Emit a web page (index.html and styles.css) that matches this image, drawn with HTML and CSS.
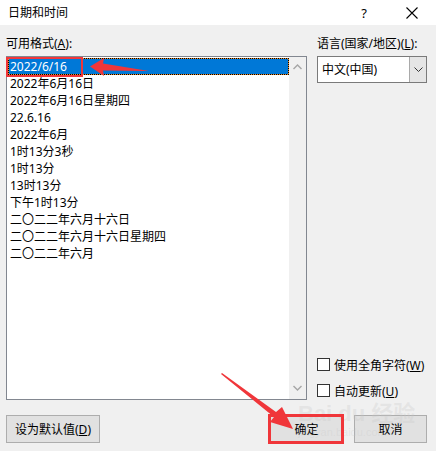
FILE: index.html
```html
<!DOCTYPE html>
<html lang="zh">
<head>
<meta charset="utf-8">
<title>日期和时间</title>
<link rel="stylesheet" href="styles.css">
</head>
<body>
<div class="dialog">
  <div class="titlebar">
    <span class="title">日期和时间</span>
    <span class="help">?</span>
    <svg class="close" width="12" height="12" viewBox="0 0 12 12"><path d="M0.5 0.5L11.5 11.5M11.5 0.5L0.5 11.5" stroke="#000" stroke-width="1.1" fill="none"/></svg>
  </div>
  <div class="content">
    <div class="main">
      <div class="left">
        <div class="label">可用格式(<u>A</u>):</div>
        <div class="listbox">
          <div class="items">
            <div class="item selected">2022/6/16</div>
            <div class="item">2022年6月16日</div>
            <div class="item">2022年6月16日星期四</div>
            <div class="item">22.6.16</div>
            <div class="item">2022年6月</div>
            <div class="item">1时13分3秒</div>
            <div class="item">1时13分</div>
            <div class="item">13时13分</div>
            <div class="item">下午1时13分</div>
            <div class="item">二〇二二年六月十六日</div>
            <div class="item">二〇二二年六月十六日星期四</div>
            <div class="item">二〇二二年六月</div>
          </div>
          <div class="scrollbar">
            <svg class="chev" width="9" height="6" viewBox="0 0 9 6"><path d="M0.5 5L4.5 1L8.5 5" stroke="#a6a6a6" stroke-width="1.4" fill="none"/></svg>
            <svg class="chev" width="9" height="6" viewBox="0 0 9 6"><path d="M0.5 1L4.5 5L8.5 1" stroke="#a6a6a6" stroke-width="1.4" fill="none"/></svg>
          </div>
        </div>
      </div>
      <div class="right">
        <div class="label">语言(国家/地区)(<u>L</u>):</div>
        <div class="combo">
          <span class="combo-text">中文(中国)</span>
          <span class="combo-btn"><svg width="9" height="5" viewBox="0 0 9 5"><path d="M0.5 0.5L4.5 4.5L8.5 0.5" stroke="#333" stroke-width="1" fill="none"/></svg></span>
        </div>
        <div class="spacer"></div>
        <label class="check"><span class="box"></span><span class="check-text">使用全角字符(<u>W</u>)</span></label>
        <label class="check"><span class="box"></span><span class="check-text">自动更新(<u>U</u>)</span></label>
      </div>
    </div>
    <div class="buttons">
      <button class="btn btn-default">设为默认值(<u>D</u>)</button>
      <div class="btn-group">
        <button class="btn btn-ok">确定</button>
        <button class="btn btn-cancel">取消</button>
      </div>
    </div>
  </div>

  <div class="watermark"><span class="wm-big">Bai du 经验</span><span class="wm-small">jingyan.baidu.com</span></div>

  <div class="mark mark-item"></div>
  <div class="mark mark-ok"></div>
  <svg class="arrows" width="436" height="451" viewBox="0 0 436 451">
    <polygon points="90,66.5 104,58 103,63.5 149,71 103,70.5 104,76" fill="#f0363a"/>
    <polygon points="221,374 222,373 276,412 282,407 293,429 270,422 274,417" fill="#f0363a"/>
  </svg>
</div>
</body>
</html>
```

FILE: styles.css
```css
* { box-sizing: border-box; }
html, body { margin: 0; padding: 0; }
body {
  width: 436px;
  height: 451px;
  overflow: hidden;
  font-family: "Noto Sans", "Noto Sans CJK SC", sans-serif;
  font-size: 12px;
  color: #000;
  background: #f0f0f0;
}
u { text-decoration: underline; text-underline-offset: 1px; }
.dialog {
  position: relative;
  width: 436px;
  height: 451px;
  display: flex;
  flex-direction: column;
}
.titlebar {
  height: 25px;
  background: #fff;
  display: flex;
  align-items: center;
  padding-left: 8px;
  line-height: 16px;
}
.title { flex: 1; }
.help { font-size: 13px; margin-right: 39px; }
.close { margin-right: 18px; }

.content {
  flex: 1;
  padding: 12px 9px 8px 6px;
  display: flex;
  flex-direction: column;
}
.main {
  display: flex;
  gap: 10px;
  height: 363px;
}
.label {
  height: 19px;
  line-height: 14px;
  white-space: nowrap;
}
.left {
  width: 301px;
  display: flex;
  flex-direction: column;
}
.listbox {
  flex: 1;
  border: 1px solid #828790;
  background: #fff;
  display: flex;
}
.items {
  flex: 1;
  padding: 1px 0 0 1px;
}
.item {
  height: 17px;
  line-height: 17px;
  padding-left: 2px;
  white-space: nowrap;
}
.item.selected {
  color: #fff;
  border: 1px dotted #000;
  background: linear-gradient(#0078d7, #0078d7) padding-box, linear-gradient(#e98a2a, #e98a2a) border-box;
  line-height: 15px;
  padding-left: 1px;
}
.scrollbar {
  width: 17px;
  background: #f0f0f0;
  display: flex;
  flex-direction: column;
  justify-content: space-between;
  align-items: center;
  padding: 7px 0 8px;
}
.right {
  flex: 1;
  display: flex;
  flex-direction: column;
}
.combo {
  height: 27px;
  border: 1px solid #7a7a7a;
  background: #fff;
  display: flex;
  align-items: stretch;
}
.combo-text {
  flex: 1;
  padding-left: 4px;
  line-height: 25px;
}
.combo-btn {
  width: 17px;
  background: #e5e5e5;
  border-left: 1px solid #a9a9a9;
  display: flex;
  align-items: center;
  justify-content: center;
}
.spacer { flex: 1; }
.check {
  display: flex;
  align-items: center;
  height: 13px;
  gap: 4px;
  white-space: nowrap;
  margin-bottom: 13px;
}
.check:last-child { margin-bottom: 3px; }
.box {
  width: 13px;
  height: 13px;
  border: 1px solid #333;
  background: #fff;
  flex: none;
}
.buttons {
  margin-top: 15px;
  display: flex;
  justify-content: space-between;
}
.btn {
  height: 28px;
  background: #e1e1e1;
  border: 1px solid #adadad;
  font: inherit;
  color: #000;
  padding: 0;
}
.btn-default { width: 94px; }
.btn-group { display: flex; gap: 11px; }
.btn-ok { width: 73px; border-color: #0078d7; }
.btn-cancel { width: 73px; }

.mark {
  position: absolute;
  border: 2px solid #f0363a;
}
.mark-item { left: 6px; top: 57px; width: 77px; height: 20px; }
.mark-ok { left: 268px; top: 414px; width: 76px; height: 30px; border-width: 3px; }
.arrows { position: absolute; left: 0; top: 0; pointer-events: none; }

.watermark {
  position: absolute;
  left: 298px;
  top: 402px;
  display: flex;
  flex-direction: column;
  color: rgba(200, 200, 200, 0.3);
  font-family: "Liberation Sans", "Noto Sans CJK SC", sans-serif;
  pointer-events: none;
}
.wm-big { font-size: 22px; font-weight: bold; line-height: 24px; }
.wm-small { font-size: 11px; line-height: 12px; }
```
